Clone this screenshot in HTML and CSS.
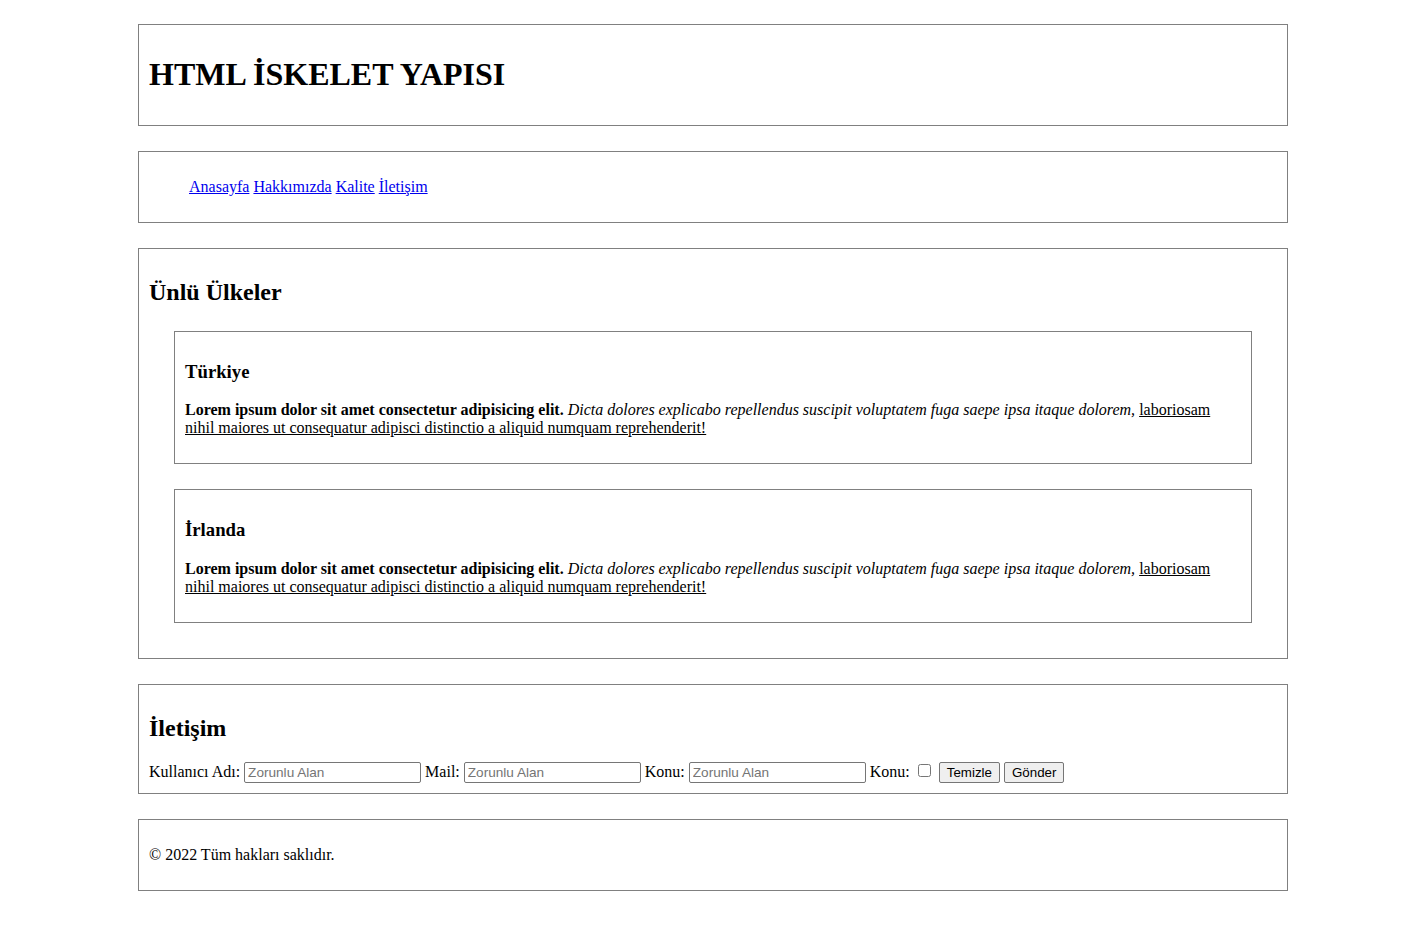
FILE: index.html
```html
<!DOCTYPE html>
<html lang="tr">
<head>
<meta charset="utf-8">
<title>HTML İskelet Yapısı</title>
<link rel="stylesheet" href="styles.css">
</head>
<body>
<div class="page">
  <header class="box">
    <h1 class="title">HTML İSKELET YAPISI</h1>
  </header>
  <nav class="box">
    <ul class="menu">
      <li><a href="#">Anasayfa</a></li>
      <li><a href="#">Hakkımızda</a></li>
      <li><a href="#">Kalite</a></li>
      <li><a href="#">İletişim</a></li>
    </ul>
  </nav>
  <main class="box">
    <h2 class="heading">Ünlü Ülkeler</h2>
    <article class="box card">
      <h3 class="subheading">Türkiye</h3>
      <p class="text"><strong>Lorem ipsum dolor sit amet consectetur adipisicing elit.</strong> <em>Dicta dolores explicabo repellendus suscipit voluptatem fuga saepe ipsa itaque dolorem,</em> <u>laboriosam nihil maiores ut consequatur adipisci distinctio a aliquid numquam reprehenderit!</u></p>
    </article>
    <article class="box card">
      <h3 class="subheading">İrlanda</h3>
      <p class="text"><strong>Lorem ipsum dolor sit amet consectetur adipisicing elit.</strong> <em>Dicta dolores explicabo repellendus suscipit voluptatem fuga saepe ipsa itaque dolorem,</em> <u>laboriosam nihil maiores ut consequatur adipisci distinctio a aliquid numquam reprehenderit!</u></p>
    </article>
  </main>
  <section class="box">
    <h2 class="heading">İletişim</h2>
    <form class="form">
      <label>Kullanıcı Adı:</label> <input class="field" type="text" placeholder="Zorunlu Alan">
      <label>Mail:</label> <input class="field" type="text" placeholder="Zorunlu Alan">
      <label>Konu:</label> <input class="field" type="text" placeholder="Zorunlu Alan">
      <label>Konu:</label> <input class="check" type="checkbox">
      <button class="btn" type="reset">Temizle</button>
      <button class="btn" type="submit">Gönder</button>
    </form>
  </section>
  <footer class="box">
    <p class="text">© 2022 Tüm hakları saklıdır.</p>
  </footer>
</div>
</body>
</html>
```
FILE: styles.css
```css
html, body {
  margin: 0;
  padding: 0;
  background: #fff;
}
body {
  font-family: "Liberation Serif", "Times New Roman", serif;
  font-size: 16px;
  color: #000;
}
.page {
  width: 1150px;
  padding: 24px 0 10px 138px;
}
.box {
  border: 1px solid #808080;
  padding: 10px;
  margin: 0 0 25px 0;
}
.card {
  margin: 25px;
}
.title {
  font-size: 32px;
  font-weight: bold;
  margin: 21.44px 0;
}
.heading {
  font-size: 24px;
  font-weight: bold;
  margin: 19.92px 0;
}
.subheading {
  font-size: 18.72px;
  font-weight: bold;
  margin: 18.72px 0;
}
.text {
  margin: 16px 0;
}
.menu {
  list-style: none;
  margin: 16px 0;
  padding-left: 40px;
}
.menu li {
  display: inline;
}
.menu a {
  color: #0000ee;
  text-decoration: underline;
}
.form {
  margin: 0;
}
.field {
  box-sizing: border-box;
  width: 177px;
  height: 21px;
  padding: 1px 3px;
  border: 1px solid #767676;
  border-radius: 2px;
  font-family: "Liberation Sans", Arial, sans-serif;
  font-size: 13.6px;
  color: #000;
  background: #fff;
  vertical-align: baseline;
}
.field::placeholder {
  color: #757575;
}
.check {
  width: 13px;
  height: 13px;
  margin: 3px 4px 3px 4px;
}
.btn {
  box-sizing: border-box;
  height: 21px;
  padding: 1px 7px;
  border: 1px solid #767676;
  border-radius: 2px;
  background: #efefef;
  font-family: "Liberation Sans", Arial, sans-serif;
  font-size: 13.333px;
  color: #000;
}
```
